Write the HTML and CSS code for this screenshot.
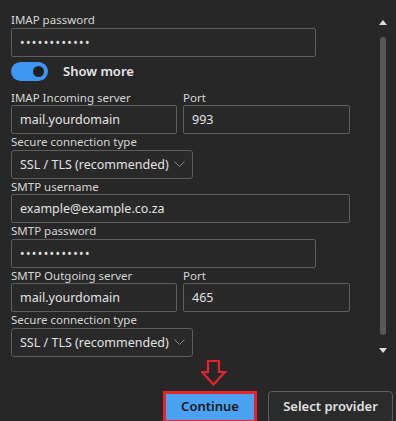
FILE: index.html
```html
<!DOCTYPE html>
<html lang="en">
<head>
    <meta charset="UTF-8">
    <meta name="viewport" content="width=device-width, initial-scale=1.0">
    <title>Account settings</title>
    <link rel="stylesheet" href="styles.css">
</head>
<body>
    <div class="main">
        <div class="form">
            <label class="field-label">IMAP password</label>
            <div class="input w-pass dots">••••••••••••</div>

            <div class="toggle-row">
                <span class="toggle"><span class="knob"></span></span>
                <span class="toggle-text">Show more</span>
            </div>

            <div class="pair">
                <div class="col">
                    <label class="field-label">IMAP Incoming server</label>
                    <div class="input w-server">mail.yourdomain</div>
                </div>
                <div class="col">
                    <label class="field-label">Port</label>
                    <div class="input w-port">993</div>
                </div>
            </div>

            <label class="field-label">Secure connection type</label>
            <div class="input select">
                <span>SSL / TLS (recommended)</span>
                <svg width="11" height="6" viewBox="0 0 11 6"><path d="M0.5 0.5 L5.5 5.5 L10.5 0.5" fill="none" stroke="#8a8a8a" stroke-width="1"/></svg>
            </div>

            <label class="field-label">SMTP username</label>
            <div class="input w-full">example@example.co.za</div>

            <label class="field-label">SMTP password</label>
            <div class="input w-pass dots">••••••••••••</div>

            <div class="pair">
                <div class="col">
                    <label class="field-label">SMTP Outgoing server</label>
                    <div class="input w-server">mail.yourdomain</div>
                </div>
                <div class="col">
                    <label class="field-label">Port</label>
                    <div class="input w-port">465</div>
                </div>
            </div>

            <label class="field-label">Secure connection type</label>
            <div class="input select">
                <span>SSL / TLS (recommended)</span>
                <svg width="11" height="6" viewBox="0 0 11 6"><path d="M0.5 0.5 L5.5 5.5 L10.5 0.5" fill="none" stroke="#8a8a8a" stroke-width="1"/></svg>
            </div>
        </div>

        <div class="scrollbar">
            <svg width="8" height="5" viewBox="0 0 8 5"><path d="M0 5 L4 0 L8 5 Z" fill="#dcdcdc"/></svg>
            <div class="thumb"></div>
            <svg width="8" height="5" viewBox="0 0 8 5"><path d="M0 0 L4 5 L8 0 Z" fill="#dcdcdc"/></svg>
        </div>
    </div>

    <div class="actions">
        <div class="continue-wrap">
            <svg class="hint-arrow" width="26" height="26" viewBox="0 0 26 26">
                <path d="M7 1 H18 V12 H24 L12.5 24.5 L1 12 H7 Z" fill="none" stroke="#e8232b" stroke-width="2.2" stroke-linejoin="miter"/>
            </svg>
            <a href="#" class="btn btn-continue">Continue</a>
        </div>
        <a href="#" class="btn btn-provider">Select provider</a>
    </div>
</body>
</html>
```

FILE: styles.css
```css
body {
    margin: 0;
    padding: 0;
    background: #272727;
    font-family: "Noto Sans", "Open Sans", sans-serif;
    color: #dedede;
    height: 421px;
    overflow: hidden;
}
.main {
    display: flex;
    height: 360px;
}
.form {
    width: 366px;
    padding: 12px 0 0 11px;
}
.field-label {
    display: block;
    font-size: 11.5px;
    line-height: 15.5px;
    color: #d6d6d6;
}
.input {
    box-sizing: border-box;
    height: 29px;
    border: 1px solid #5e5e5e;
    border-radius: 2px;
    background: #292929;
    font-size: 12.5px;
    line-height: 27px;
    padding: 0 8px;
    color: #e2e2e2;
}
.w-pass {
    width: 305px;
}
.w-full {
    width: 339px;
}
.w-server {
    width: 166px;
}
.w-port {
    width: 167px;
}
.dots {
    font-size: 12px;
    letter-spacing: 1.4px;
}
.select {
    width: 182px;
    display: flex;
    align-items: center;
    justify-content: space-between;
    padding-right: 7px;
    border-radius: 3px;
}
.pair {
    display: flex;
    gap: 6px;
}
.toggle-row {
    display: flex;
    align-items: center;
    height: 19px;
    margin: 5px 0 9px 0;
}
.toggle {
    display: flex;
    align-items: center;
    justify-content: flex-end;
    box-sizing: border-box;
    width: 37px;
    height: 19px;
    border-radius: 10px;
    background: #3d95f4;
    padding-right: 4px;
}
.knob {
    width: 11px;
    height: 11px;
    border-radius: 50%;
    background: #1e1e1e;
}
.toggle-text {
    margin-left: 15px;
    font-size: 13px;
    font-weight: 600;
    color: #e6e6e6;
}
.scrollbar {
    display: flex;
    flex-direction: column;
    align-items: center;
    width: 8px;
    padding-top: 20px;
    margin-left: 2px;
}
.thumb {
    width: 6px;
    height: 298px;
    margin: 12px 0 13px 0;
    border-radius: 3px;
    background: #585858;
}
.actions {
    display: flex;
    justify-content: flex-end;
    align-items: flex-end;
    gap: 11px;
    padding-right: 3px;
}
.continue-wrap {
    display: flex;
    flex-direction: column;
    align-items: center;
}
.hint-arrow {
    margin: 0 0 5px 8px;
}
.btn {
    box-sizing: border-box;
    height: 32px;
    display: flex;
    align-items: center;
    justify-content: center;
    text-decoration: none;
    font-size: 13px;
    font-weight: 600;
}
.btn-continue {
    width: 94px;
    background: #4ba2f2;
    border: 3px solid #e8232b;
    color: #1a1a1a;
    padding-bottom: 2px;
}
.btn-provider {
    width: 125px;
    background: #2b2b2b;
    border: 1px solid #5e5e5e;
    border-radius: 4px;
    color: #e0e0e0;
    padding-bottom: 3px;
}
```
